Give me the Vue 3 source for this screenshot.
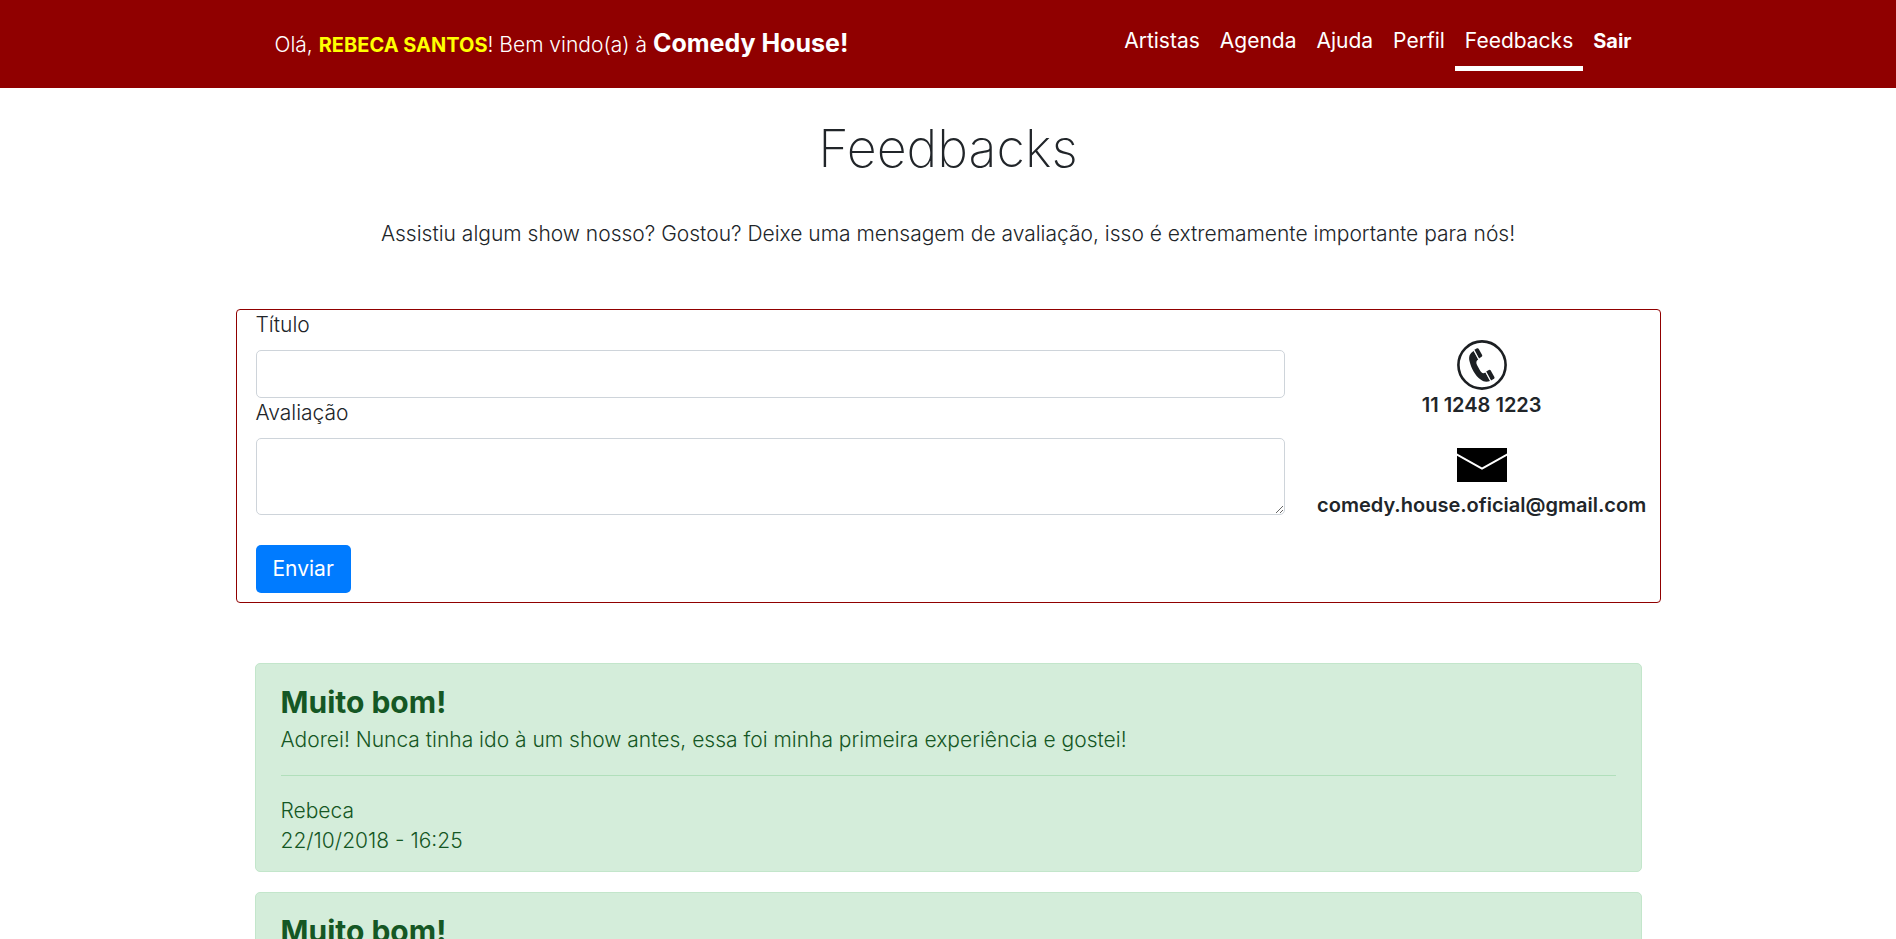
<script setup>
import { ref } from 'vue'

const links = ['Artistas', 'Agenda', 'Ajuda', 'Perfil', 'Feedbacks', 'Sair']
const active = 'Feedbacks'

const title = ref('')
const review = ref('')

const feedbacks = [
  {
    id: 1,
    title: 'Muito bom!',
    text: 'Adorei! Nunca tinha ido à um show antes, essa foi minha primeira experiência e gostei!',
    author: 'Rebeca',
    date: '22/10/2018 - 16:25',
  },
  {
    id: 2,
    title: 'Muito bom!',
    text: 'Adorei! Nunca tinha ido à um show antes, essa foi minha primeira experiência e gostei!',
    author: 'Rebeca',
    date: '22/10/2018 - 16:25',
  },
]
</script>

<template>
  <div class="page">
    <header class="topbar">
      <div class="container topbar-inner">
        <p class="greeting">
          Olá, <b class="user">REBECA SANTOS</b>! Bem vindo(a) à
          <b class="brand">Comedy House!</b>
        </p>
        <nav class="nav">
          <a
            v-for="link in links"
            :key="link"
            href="#"
            class="nav-link"
            :class="{ active: link === active, strong: link === 'Sair' }"
          >{{ link }}</a>
        </nav>
      </div>
    </header>

    <main>
      <h1 class="heading">Feedbacks</h1>
      <p class="lead">
        Assistiu algum show nosso? Gostou? Deixe uma mensagem de avaliação, isso é extremamente importante para nós!
      </p>

      <section class="panel">
        <form class="form" @submit.prevent>
          <label for="titulo">Título</label>
          <input id="titulo" v-model="title" type="text" />
          <label for="avaliacao">Avaliação</label>
          <textarea id="avaliacao" v-model="review"></textarea>
          <button type="submit">Enviar</button>
        </form>
        <aside class="contact">
          <svg class="phone" viewBox="0 0 50 50" width="50" height="50" aria-hidden="true">
            <circle cx="25" cy="25" r="23.6" fill="none" stroke="#1c1f22" stroke-width="2.6" />
            <g fill="#1c1f22">
              <path d="M16.6 11 C12.6 13.6 11.4 16.6 12.6 21.4 C14.2 28.2 18.4 35.8 23.6 39.6 C26.8 42 29.6 42.4 33 41 L28.4 32.6 C25.8 33.8 24.4 33 22.6 29.8 L20 25 C18.8 22.4 19.2 21 21.2 19.6 Z" />
              <path d="M17.4 9.8 L20 8.3 Q21 7.8 21.6 8.8 L25.1 15 Q25.6 16.1 24.6 16.8 L22 18.4 Z" />
              <path d="M29.2 31.6 L31.8 29.9 Q32.9 29.3 33.6 30.3 L37.4 37 Q37.9 38 37 38.7 L34 40.4 Z" />
            </g>
            <path d="M17 10.4 L21.6 19 M28.8 32.1 L33.5 40.7" stroke="#fff" stroke-width=".7" />
          </svg>
          <strong class="phone-text">11 1248 1223</strong>
          <svg class="mail" viewBox="0 0 50 34" width="50" height="34" aria-hidden="true">
            <rect width="50" height="34" fill="#000" />
            <path d="M-1 6 L25 20.5 L51 6" fill="none" stroke="#fff" stroke-width="2" />
          </svg>
          <strong class="mail-text">comedy.house.oficial@gmail.com</strong>
        </aside>
      </section>

      <section class="container list">
        <article v-for="item in feedbacks" :key="item.id" class="card">
          <h2>{{ item.title }}</h2>
          <p>{{ item.text }}</p>
          <hr />
          <p>{{ item.author }}</p>
          <p>{{ item.date }}</p>
        </article>
      </section>
    </main>
  </div>
</template>

<style>
body {
  margin: 0;
  background: #fff;
}
</style>

<style scoped>
/* The list runs past the fold and scrolls without a visible bar. */
.page {
  height: 100vh;
  overflow-y: auto;
  scrollbar-width: none;
  font-family: Inter, "Open Sans", sans-serif;
  font-size: 21px;
  font-weight: 300;
  line-height: 30px;
  color: #212529;
}
.page *,
.page {
  box-sizing: border-box;
}
p,
h1,
h2 {
  margin: 0;
}
.container {
  width: 100%;
  max-width: 1425px;
  margin: 0 auto;
  padding: 0 19px;
}
.topbar {
  background: #900000;
  color: #fff;
}
.topbar-inner {
  display: flex;
  justify-content: space-between;
  align-items: center;
  min-height: 88px;
}
.greeting {
  padding-left: 20px;
}
.user {
  color: #ff0;
  font-size: 20px;
  font-weight: 700;
}
.brand {
  font-size: 25px;
  font-weight: 700;
}
.nav {
  display: flex;
  font-weight: 400;
}
.nav-link {
  padding: 8px 10px 10px;
  border-bottom: 5px solid transparent;
  color: #fff;
  text-decoration: none;
}
.nav-link.active {
  border-bottom-color: #fff;
}
.nav-link.strong {
  font-size: 20px;
  font-weight: 700;
}
.heading {
  margin-top: 31px;
  font-size: 52px;
  font-weight: 200;
  line-height: 60px;
  text-align: center;
}
.lead {
  margin-top: 40px;
  text-align: center;
}
.panel {
  display: grid;
  grid-template-columns: 3fr 1fr;
  width: 100%;
  max-width: 1425px;
  margin: 60px auto 0;
  border: 1px solid #900000;
  border-radius: 4px;
}
.form {
  display: flex;
  flex-direction: column;
  padding: 0 19px 9px;
}
label {
  margin-bottom: 10px;
}
input,
textarea {
  display: block;
  width: 100%;
  height: 48px;
  padding: 8px 15px;
  border: 1px solid #ced4da;
  border-radius: 5px;
  background: #fff;
  font: inherit;
  color: #495057;
}
textarea {
  height: 77px;
  resize: vertical;
}
button {
  align-self: flex-start;
  height: 48px;
  margin-top: 30px;
  padding: 0 17px;
  border: 0;
  border-radius: 5px;
  background: #007bff;
  color: #fff;
  font: inherit;
  font-weight: 400;
}
.contact {
  display: flex;
  flex-direction: column;
  align-items: center;
  min-width: 0;
  padding-top: 30px;
  font-size: 20px;
}
.contact svg {
  display: block;
}
.contact strong {
  font-weight: 600;
  white-space: nowrap;
}
.mail {
  margin-top: 28px;
}
.mail-text {
  margin-top: 8px;
}
.list {
  margin-top: 60px;
}
.card {
  margin-bottom: 20px;
  padding: 15px 25px;
  border: 1px solid #c3e6cb;
  border-radius: 5px;
  background: #d4edda;
  color: #155724;
}
.card h2 {
  font-size: 30px;
  font-weight: 700;
  line-height: 46px;
}
hr {
  margin: 20px 0;
  border: 0;
  border-top: 1px solid #b1dfbb;
}
</style>
